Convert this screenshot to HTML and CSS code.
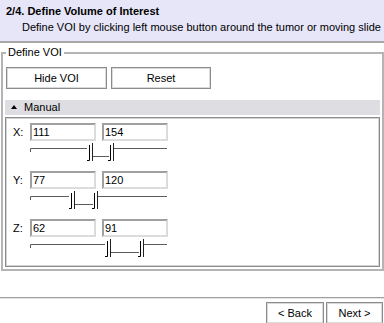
FILE: index.html
```html
<!DOCTYPE html>
<html>

<head>
	<meta http-equiv="Content-Type" content="text/html; charset=utf-8" />
	<title>Define Volume of Interest</title>
	<link rel="stylesheet" href="styles.css">
</head>

<body>
	<div class="header">
		<div class="title">2/4. Define Volume of Interest</div>
		<div class="subtitle">Define VOI by clicking left mouse button around the tumor or moving slide</div>
	</div>

	<fieldset class="voi">
		<legend>Define VOI</legend>
		<div class="actions">
			<button class="btn btn-hide">Hide VOI</button>
			<button class="btn btn-reset">Reset</button>
		</div>

		<div class="section-bar"><span class="arrow"></span>Manual</div>

		<div class="section-body">
			<!-- X -->
			<div class="axis">
				<div class="fields">
					<label>X:</label>
					<input type="text" value="111">
					<input type="text" value="154">
				</div>
				<svg class="range" width="138" height="18" viewBox="0 0 138 18">
					<path class="track" d="M0.5 9 V5.5 H57 M84 5.5 H137" />
					<path class="inner" d="M62 13.5 H79" />
					<g transform="translate(57,0)">
						<rect x="1" y="0" width="5" height="18" fill="#fff" />
						<path class="thumb-l" d="M0 17.5 H2.5 V2" />
						<path class="thumb-r" d="M5.5 0 V18" />
					</g>
					<g transform="translate(78,0)">
						<rect x="1" y="0" width="5" height="18" fill="#fff" />
						<path class="thumb-l" d="M0 17.5 H2.5 V2" />
						<path class="thumb-r" d="M5.5 0 V18" />
					</g>
				</svg>
			</div>
			<!-- Y -->
			<div class="axis">
				<div class="fields">
					<label>Y:</label>
					<input type="text" value="77">
					<input type="text" value="120">
				</div>
				<svg class="range" width="138" height="18" viewBox="0 0 138 18">
					<path class="track" d="M0.5 9 V5.5 H39 M68 5.5 H137" />
					<path class="inner" d="M44 13.5 H63" />
					<g transform="translate(39,0)">
						<rect x="1" y="0" width="5" height="18" fill="#fff" />
						<path class="thumb-l" d="M0 17.5 H2.5 V2" />
						<path class="thumb-r" d="M5.5 0 V18" />
					</g>
					<g transform="translate(62,0)">
						<rect x="1" y="0" width="5" height="18" fill="#fff" />
						<path class="thumb-l" d="M0 17.5 H2.5 V2" />
						<path class="thumb-r" d="M5.5 0 V18" />
					</g>
				</svg>
			</div>
			<!-- Z -->
			<div class="axis">
				<div class="fields">
					<label>Z:</label>
					<input type="text" value="62">
					<input type="text" value="91">
				</div>
				<svg class="range" width="138" height="18" viewBox="0 0 138 18">
					<path class="track" d="M0.5 9 V5.5 H75 M114 5.5 H137" />
					<path class="inner" d="M80 13.5 H109" />
					<g transform="translate(75,0)">
						<rect x="1" y="0" width="5" height="18" fill="#fff" />
						<path class="thumb-l" d="M0 17.5 H2.5 V2" />
						<path class="thumb-r" d="M5.5 0 V18" />
					</g>
					<g transform="translate(108,0)">
						<rect x="1" y="0" width="5" height="18" fill="#fff" />
						<path class="thumb-l" d="M0 17.5 H2.5 V2" />
						<path class="thumb-r" d="M5.5 0 V18" />
					</g>
				</svg>
			</div>
		</div>
	</fieldset>

	<div class="footer">
		<button class="btn btn-back">&lt; Back</button>
		<button class="btn btn-next">Next &gt;</button>
	</div>
</body>

</html>
```

FILE: styles.css
```css
body,
div,
fieldset,
legend {
	margin: 0;
	padding: 0;
}

body {
	width: 384px;
	height: 323px;
	overflow: hidden;
	background: #fff;
	color: #000;
	font: 11px/13px "Liberation Sans", Arial, sans-serif;
}

/* header */
.header {
	height: 41px;
	background: #e6e6f8;
	border-bottom: 2px solid #a8a8a8;
}

.title {
	padding: 5px 0 0 6px;
	font-weight: bold;
}

.subtitle {
	padding: 3px 0 0 22px;
	white-space: nowrap;
	overflow: hidden;
}

/* Define VOI group */
.voi {
	margin: 3px 0 0 1px;
	padding: 8px 2px 2px;
	min-inline-size: 0;
	border: 2px solid #b4b4b4;
}

.voi legend {
	margin-left: 1px;
	padding: 0 2px;
}

.actions {
	display: flex;
	gap: 4px;
	padding-left: 1px;
}

.btn {
	height: 22px;
	padding: 0;
	background: #fff;
	color: #000;
	font: 11px "Liberation Sans", Arial, sans-serif;
	border: 1px solid #8c8c8c;
	box-shadow: inset 0 0 0 1px #dadada;
}

.btn-hide {
	width: 101px;
}

.btn-reset {
	width: 100px;
}

.section-bar {
	display: flex;
	align-items: center;
	height: 15px;
	margin-top: 11px;
	background: #dedee2;
}

.arrow {
	width: 0;
	height: 0;
	margin: 0 7px 2px 6px;
	border-left: 3px solid transparent;
	border-right: 3px solid transparent;
	border-bottom: 4px solid #000;
}

.section-body {
	box-sizing: border-box;
	height: 150px;
	margin-top: 2px;
	padding: 5px 0 0;
	border: 1px solid #8c8c8c;
	box-shadow: inset 1px 1px 0 #d4d4d4, inset -1px -1px 0 #d4d4d4;
}

.axis {
	margin-bottom: 10px;
}

.fields {
	display: flex;
	align-items: center;
	gap: 6px;
}

.fields label {
	width: 18px;
	padding-left: 7px;
	margin-right: -7px;
}

.fields input {
	box-sizing: border-box;
	width: 66px;
	height: 18px;
	margin: 0;
	padding: 0 1px;
	font: 11px "Liberation Sans", Arial, sans-serif;
	color: #000;
	background: #fff;
	border: 2px solid;
	border-color: #a0a0a0 #dcdcdc #dcdcdc #a0a0a0;
	outline: none;
}

.range {
	display: block;
	margin: 2px 0 0 24px;
	fill: none;
}

.range .track {
	stroke: #5a5a5a;
	stroke-width: 1;
}

.range .inner {
	stroke: #5a5a5a;
	stroke-width: 1;
}

.range .thumb-l {
	stroke: #000;
	stroke-width: 1;
}

.range .thumb-r {
	stroke: #222;
	stroke-width: 1;
}

/* footer */
.footer {
	display: flex;
	justify-content: flex-end;
	gap: 2px;
	margin-top: 26px;
	padding: 4px 1px 0 0;
	border-top: 1px solid #a0a0a0;
	box-shadow: inset 0 1px 0 #e4e4e4;
}

.btn-back {
	width: 58px;
}

.btn-next {
	width: 57px;
}
```
